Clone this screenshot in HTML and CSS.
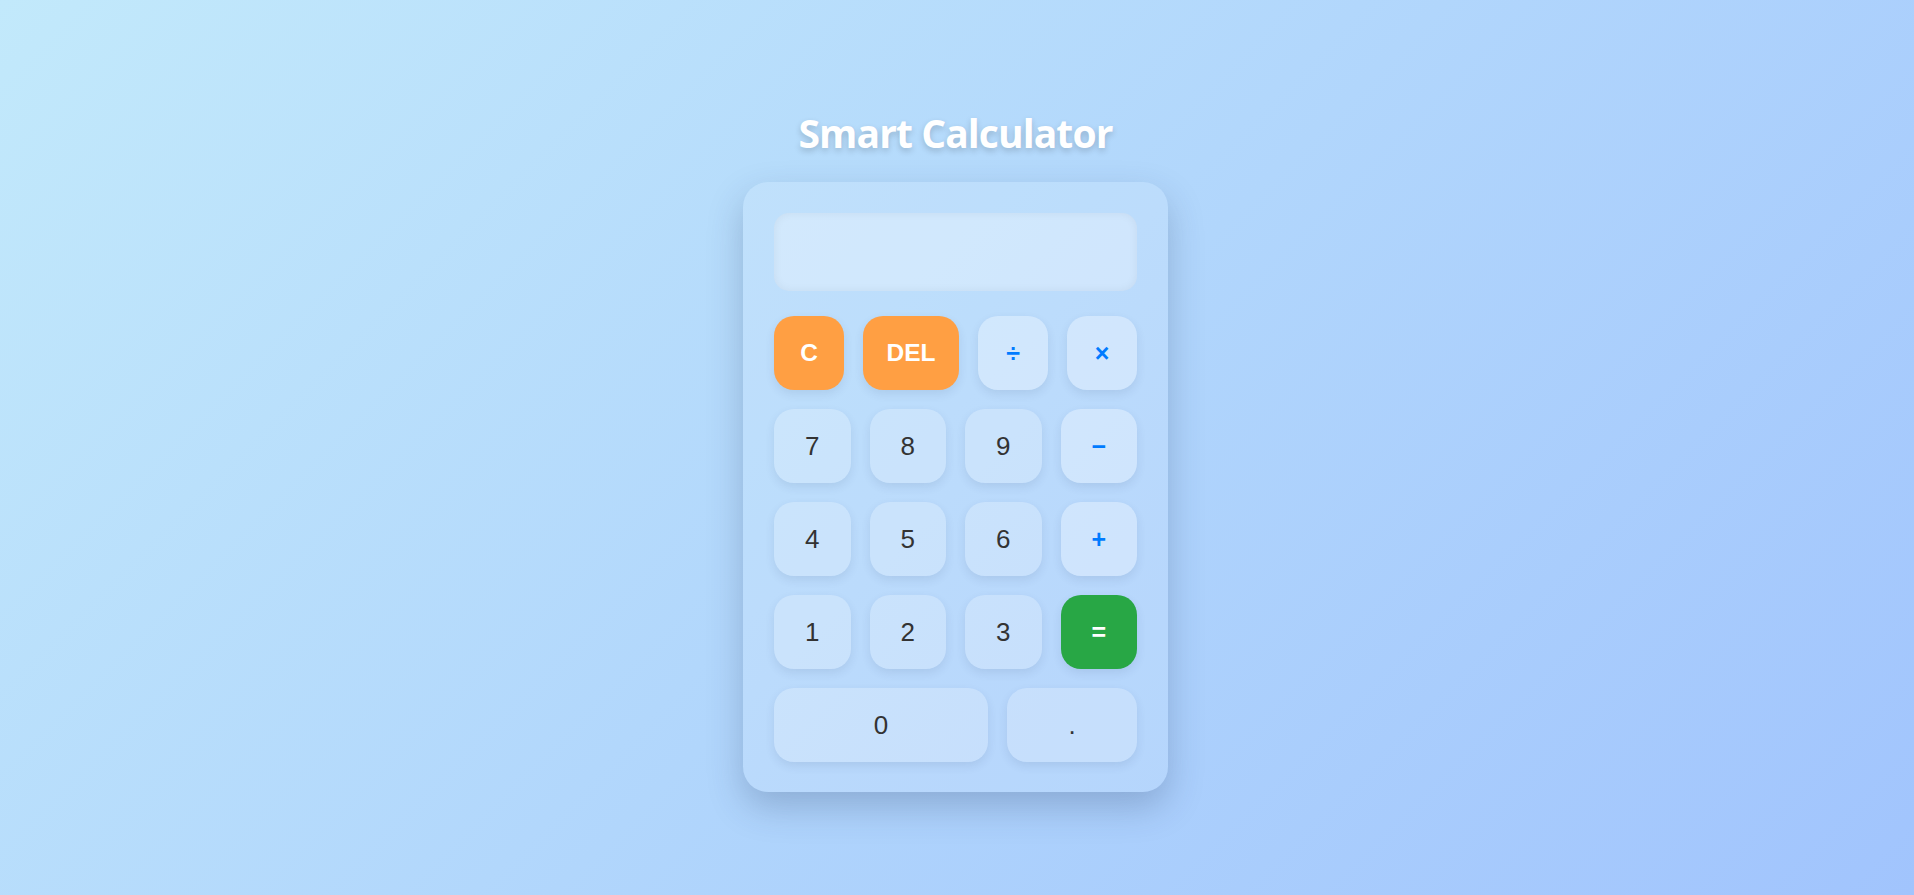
FILE: index.html
```html
<!DOCTYPE html>
<html lang="en">
<head>
<meta charset="UTF-8">
<title>Smart Calculator</title>
<link rel="stylesheet" href="styles.css">
</head>
<body>
  <h1 class="title">Smart Calculator</h1>
  <div class="calculator">
    <div class="display"></div>
    <div class="row">
      <button class="btn btn-action btn-c">C</button>
      <button class="btn btn-action btn-del">DEL</button>
      <button class="btn btn-op btn-small">÷</button>
      <button class="btn btn-op btn-small">×</button>
    </div>
    <div class="row">
      <button class="btn btn-num">7</button>
      <button class="btn btn-num">8</button>
      <button class="btn btn-num">9</button>
      <button class="btn btn-op">−</button>
    </div>
    <div class="row">
      <button class="btn btn-num">4</button>
      <button class="btn btn-num">5</button>
      <button class="btn btn-num">6</button>
      <button class="btn btn-op">+</button>
    </div>
    <div class="row">
      <button class="btn btn-num">1</button>
      <button class="btn btn-num">2</button>
      <button class="btn btn-num">3</button>
      <button class="btn btn-equals">=</button>
    </div>
    <div class="row">
      <button class="btn btn-num btn-zero">0</button>
      <button class="btn btn-num">.</button>
    </div>
  </div>
</body>
</html>
```
FILE: styles.css
```css
* { box-sizing: border-box; }

html, body { height: 100%; }

body {
  margin: 0;
  padding: 7px 3px 0 0;
  min-height: 100vh;
  display: flex;
  flex-direction: column;
  align-items: center;
  justify-content: center;
  background: linear-gradient(135deg, #c2e9fb 0%, #a1c4fd 100%);
  font-family: "Liberation Sans", Arial, sans-serif;
}

.title {
  margin: 0 0 26px 0;
  font-family: "Open Sans", "Noto Sans", sans-serif;
  font-weight: 700;
  font-size: 39px;
  line-height: 1.18;
  color: #ffffff;
  letter-spacing: -0.9px;
  text-shadow: 0 3px 6px rgba(0, 0, 0, 0.18);
}

.calculator {
  width: 425px;
  padding: 31px 31px 30px;
  border-radius: 25px;
  background: rgba(255, 255, 255, 0.13);
  box-shadow: 0 15px 35px rgba(40, 60, 100, 0.25);
  display: flex;
  flex-direction: column;
  gap: 19px;
}

.display {
  height: 78px;
  margin-bottom: 6px;
  border-radius: 15px;
  background: rgba(255, 255, 255, 0.3);
  box-shadow: inset 0 0 10px rgba(0, 0, 0, 0.06);
}

.row {
  display: flex;
  gap: 19px;
}

.btn {
  flex: 1;
  height: 74px;
  border: none;
  border-radius: 20px;
  font-family: "Liberation Sans", Arial, sans-serif;
  font-size: 26px;
  color: #333333;
  background: rgba(255, 255, 255, 0.2);
  box-shadow: 0 4px 10px rgba(40, 60, 100, 0.1);
  padding: 0;
}

.btn-num { background: rgba(255, 255, 255, 0.22); }

.btn-op {
  background: rgba(255, 255, 255, 0.32);
  color: #007bff;
  font-weight: 700;
  font-size: 25px;
}

.btn-small { flex: 0 0 70px; }

.btn-action {
  background: #ff9f43;
  color: #ffffff;
  font-weight: 700;
  font-size: 24.5px;
}

.btn-c { flex: 0 0 70px; }

.btn-equals {
  background: #28a745;
  color: #ffffff;
  font-weight: 700;
  font-size: 25px;
}

.btn-zero { flex: 0 0 214px; }
```
